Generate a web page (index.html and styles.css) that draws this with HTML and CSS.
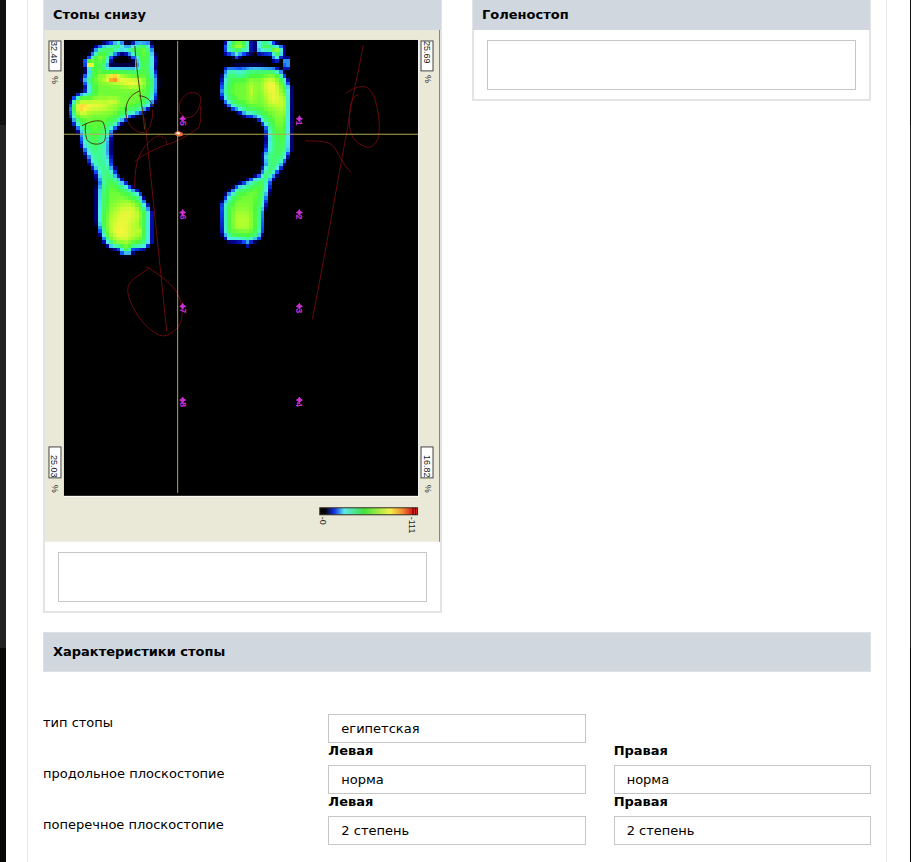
FILE: index.html
```html
<!DOCTYPE html>
<html lang="ru">
<head>
    <meta charset="UTF-8">
    <meta name="viewport" content="width=device-width, initial-scale=1.0">
    <title>Характеристики стопы</title>
    <link rel="stylesheet" href="styles.css">
</head>
<body>
    <main class="page">
        <div class="content">
            <div class="cards">
                <section class="card">
                    <h2 class="card-title">Стопы снизу</h2>
                    <svg class="scan" viewBox="45 30 396 513" role="img" aria-label="Скан стоп">
                        <rect class="scan-bg" x="43" y="29" width="400" height="514"/>
                        <path d="M441 29V543" stroke="#85857d" stroke-width="2"/>
                        <rect x="64" y="40" width="356" height="458" fill="#fff"/>
                        <rect x="64" y="40" width="355" height="457" fill="#000"/>
                        <g id="heat" shape-rendering="crispEdges"></g>

                        <!-- pen marks -->
                        <g class="pen">
                            <path d="M145 118 167 332"/>
                            <path d="M145 147C156 134 160 136 162 137C166 138 167 141 167 144M135 162C142 155 160 147 170 144C184 139 192 133 199 128C202 121 201 114 201 106"/>
                            <path d="M135 188C135 168 137 158 145 147"/>
                            <path d="M190 93C198 92 202 95 201 102C199 112 194 118 188 118C181 117 178 111 180 105C181 99 186 94 190 93Z"/>
                            <path d="M126 108C125 122 132 132 143 133C151 132 153 119 153 110"/>
                            <path d="M146 267 150 269C160 276 170 283 176 291C183 301 186 323 176 330C171 335 164 339 158 335C143 328 129 305 128 292C128 282 132 281 149 269"/>
                            <path d="M364 45C360 70 352 100 348 130C343 155 325 260 313 320"/>
                            <path d="M347 93C355 88 364 84 370 89C377 96 381 118 380 132C379 144 373 149 366 147C355 143 350 135 350 120C350 108 352 96 359 95"/>
                            <path d="M306 141C320 142 330 140 336 149C341 157 343 164 352 173"/>
                        </g>
                        <g class="pen pen-dark">
                            <path d="M135 46C137 74 143 110 145 130"/>
                            <path d="M140 91C130 95 126 102 126 112M139 96C147 96 151 101 153 106"/>
                            <path d="M82 126C91 121 99 120 103 122C106 128 107 138 104 142C99 146 91 145 87 140C85 134 85 128 86 124"/>
                        </g>

                        <path class="axis" d="M64 134.500H419M178 41V494"/>
                        <path d="M175 133l3-2 5 2 0 3-4 1-4-2z" fill="#f06a35"/>
                        <path d="M177 133l3 1" stroke="#fff" stroke-width="2"/>

                        <g id="marks"></g>

                        <g class="scale-box">
                            <rect x="49" y="41" width="12" height="30"/>
                            <rect x="49" y="448" width="12" height="31"/>
                            <rect x="422" y="41" width="12" height="30"/>
                            <rect x="422" y="448" width="12" height="31"/>
                        </g>
                        <g class="scale-text">
                            <text transform="translate(51 41) rotate(90)">32.46</text>
                            <text transform="translate(52 76) rotate(90)">%</text>
                            <text transform="translate(51 456) rotate(90)">25.03</text>
                            <text transform="translate(52 486) rotate(90)">%</text>
                            <text transform="translate(425 41) rotate(90)">25.69</text>
                            <text transform="translate(426 75) rotate(90)">%</text>
                            <text transform="translate(425 456) rotate(90)">16.82</text>
                            <text transform="translate(426 486) rotate(90)">%</text>
                            <text transform="translate(321 518) rotate(90)">-0</text>
                            <text transform="translate(410 518) rotate(90)">-111</text>
                        </g>

                        <defs>
                            <linearGradient id="palette">
                                <stop offset="0.050" stop-color="#000"/>
                                <stop offset="0.150" stop-color="#1732e6"/>
                                <stop offset="0.250" stop-color="#5be8ec"/>
                                <stop offset="0.450" stop-color="#42e13e"/>
                                <stop offset="0.720" stop-color="#f4f04a"/>
                                <stop offset="0.850" stop-color="#f18a30"/>
                                <stop offset="0.940" stop-color="#dc1d18"/>
                            </linearGradient>
                        </defs>
                        <rect x="320.500" y="509" width="98" height="7" fill="url(#palette)" stroke="#322b20"/>
                        <path d="M414 509v7M416.500 509v7" stroke="#400"/>
                    </svg>
                    <textarea class="note" aria-label="Стопы снизу"></textarea>
                </section>

                <section class="card">
                    <h2 class="card-title">Голеностоп</h2>
                    <textarea class="note" aria-label="Голеностоп"></textarea>
                </section>
            </div>

            <h2 class="section-title">Характеристики стопы</h2>

            <form class="form">
                <div class="row">
                    <label class="name" for="type">тип стопы</label>
                    <div class="field">
                        <input id="type" type="text" value="египетская">
                    </div>
                </div>
                <div class="row" role="group" aria-labelledby="long-name">
                    <span class="name name-low" id="long-name">продольное плоскостопие</span>
                    <div class="field">
                        <label for="long-left">Левая</label>
                        <input id="long-left" type="text" value="норма">
                    </div>
                    <div class="field">
                        <label for="long-right">Правая</label>
                        <input id="long-right" type="text" value="норма">
                    </div>
                </div>
                <div class="row" role="group" aria-labelledby="cross-name">
                    <span class="name name-low" id="cross-name">поперечное плоскостопие</span>
                    <div class="field">
                        <label for="cross-left">Левая</label>
                        <input id="cross-left" type="text" value="2 степень">
                    </div>
                    <div class="field">
                        <label for="cross-right">Правая</label>
                        <input id="cross-right" type="text" value="2 степень">
                    </div>
                </div>
            </form>
        </div>
    </main>
    <script src="scan.js"></script>
</body>
</html>
```
FILE: styles.css
```css
* {
    box-sizing: border-box;
}

body {
    margin: 0;
    padding: 0 1px 0 6px;
    background: linear-gradient(#111 0, #111 125px, #222 125px, #222 648px, #080904 648px);
    font-family: "DejaVu Sans", Verdana, sans-serif;
    font-size: 13px;
    line-height: 16px;
    color: #000;
}

.page {
    min-height: 100vh;
    padding: 0 23px 0 21px;
    background: #fff;
}

.content {
    min-height: 100vh;
    padding: 0 15px;
    border: solid #e6e6e6;
    border-width: 0 1px;
}

.cards {
    display: grid;
    grid-template-columns: 1fr 1fr;
    gap: 30px;
    align-items: start;
}

.card {
    border: 2px solid #e3e4e5;
    border-top: 0;
}

.card-title,
.section-title {
    margin: 0;
    font-size: 13px;
    background: #d0d7de;
}

.card-title {
    margin: 0 -1px;
    padding: 7px 9px;
}

.section-title {
    margin-top: 19px;
    padding: 11px 9px;
    border: 1px solid #dde1e5;
}

.scan {
    display: block;
    width: 100%;
    height: auto;
}

.scan-bg {
    fill: #eae9d7;
}

.pen {
    fill: none;
    stroke: #660a0e;
    stroke-width: 1;
}

.pen-dark {
    stroke: #4b3a12;
}

.axis {
    fill: none;
    stroke: #b3aa50;
}

.scale-box {
    fill: #fff;
    stroke: #444;
}

.scale-text {
    font-family: "Liberation Sans", Arial, sans-serif;
    font-size: 9px;
    fill: #222;
}

.mark {
    font-family: "Liberation Sans", Arial, sans-serif;
    font-size: 9px;
    font-weight: bold;
    fill: #d02fd6;
}

.note {
    display: block;
    width: calc(100% - 26px);
    height: 50px;
    margin: 10px 13px 9px;
    border: 1px solid #c6c6c6;
    background: #fff;
    resize: none;
}

.form {
    margin-top: 42px;
}

.row {
    display: grid;
    grid-template-columns: repeat(3, 1fr);
    column-gap: 28px;
}

.name {
    padding-top: 1px;
}

.name-low {
    padding-top: 23px;
}

.field label {
    display: block;
    height: 22px;
    font-weight: bold;
}

.field input {
    display: block;
    width: 100%;
    height: 29px;
    padding: 0 12px;
    border: 1px solid #c6c6c6;
    background: #fff;
    font: inherit;
    color: inherit;
}
```
FILE: scan.js
```js
const SVG = 'http://www.w3.org/2000/svg';
const CELL = 3.7;

// outlines of the pressure areas
const areas = [
    // left foot
    [113,41, 105,43, 97,46, 92,52, 88,57, 83,62, 86,68, 86,73, 82,78, 84,84, 86,90, 78,94, 72,99, 69,108, 70,117,
     74,125, 79,133, 81,145, 86,157, 90,166, 96,175, 98,183, 97,190, 97,222, 99,232, 104,243, 111,249, 120,251,
     122,256, 132,256, 134,251, 146,250, 152,243, 152,212, 146,201, 141,193, 132,187, 124,181, 117,174, 113,165,
     111,152, 111,140, 114,131, 122,124, 131,118, 142,114, 151,108, 156,100, 158,90, 158,78, 155,68, 156,60,
     154,50, 150,41, 137,40, 131,44, 125,44, 123,38, 113,38],
    // gap under the toes
    [110,66, 112,59, 117,55, 124,53, 129,56, 134,60, 135,66],
    // right foot
    [226,67, 237,66, 258,66, 275,67, 283,71, 289,80, 292,88, 292,150, 288,160, 283,168, 277,176, 272,182, 270,192,
     267,205, 265,212, 264,232, 260,240, 250,244, 248,247, 243,243, 228,242, 222,234, 221,206, 227,194, 236,186,
     245,182, 252,178, 260,174, 264,165, 263,155, 266,148, 267,138, 265,128, 258,120, 250,117, 247,118, 240,113,
     232,110, 225,104, 222,98, 220,92, 222,80, 224,72],
    // right toes
    [228,37, 252,37, 252,53, 242,56, 238,60, 233,56, 226,54, 224,48],
    [256,37, 270,37, 276,43, 285,46, 285,54, 279,62, 273,61, 271,55, 258,54, 256,50],
    [283,58, 291,58, 291,69, 285,69, 283,64]
];

// x, y, radius x, radius y, strength
const spots = [
    [113, 78, 6, 3, 0.26], [116, 78, 14, 6, 0.16], [133, 83, 12, 5, 0.18], [90, 64, 3, 3, 0.7],
    [80, 108, 7, 10, 0.2], [95, 106, 18, 7, 0.18], [113, 101, 6, 3, 0.1],
    [121, 232, 16, 19, 0.2], [141, 232, 3, 4, 0.1], [130, 212, 14, 10, 0.12],
    [272, 86, 9, 12, 0.2], [252, 91, 4, 12, 0.1], [285, 103, 6, 12, 0.16],
    [274, 101, 7, 8, 0.12], [243, 222, 14, 14, 0.1], [239, 44, 7, 5, 0.18], [276, 50, 4, 4, 0.2],
    [284, 120, 6, 16, 0.08], [146, 50, 5, 6, 0.08], [101, 58, 5, 4, 0.1],
    // lighter arches
    [101, 155, 14, 25, -0.12], [240, 72, 8, 8, -0.14], [275, 155, 10, 20, -0.06]
];

const colors = [
    [0, 0, 0, 20], [0.08, 0, 0, 150], [0.17, 15, 80, 255], [0.28, 80, 235, 235], [0.42, 60, 250, 150],
    [0.54, 75, 250, 60], [0.68, 175, 255, 45], [0.8, 250, 245, 60], [0.92, 255, 130, 30], [1, 225, 25, 20]
];

function inside(p, x, y) {
    let hit = false;
    for (let i = 0, j = p.length - 2; i < p.length; j = i, i += 2) {
        if ((p[i + 1] > y) !== (p[j + 1] > y) &&
            x < (p[j] - p[i]) * (y - p[i + 1]) / (p[j + 1] - p[i + 1]) + p[i]) {
            hit = !hit;
        }
    }
    return hit;
}

function edgeDistance(p, x, y) {
    let best = 1000;
    for (let i = 0, j = p.length - 2; i < p.length; j = i, i += 2) {
        const dx = p[i] - p[j];
        const dy = p[i + 1] - p[j + 1];
        const t = Math.max(0, Math.min(1, ((x - p[j]) * dx + (y - p[j + 1]) * dy) / (dx * dx + dy * dy)));
        best = Math.min(best, Math.hypot(x - p[j] - t * dx, y - p[j + 1] - t * dy));
    }
    return best;
}

function colorOf(v) {
    v = Math.max(0, Math.min(1, v));
    let i = 1;
    while (colors[i][0] < v) i++;
    const a = colors[i - 1];
    const b = colors[i];
    const t = (v - a[0]) / (b[0] - a[0]);
    return 'rgb(' + [1, 2, 3].map(k => Math.round(a[k] + (b[k] - a[k]) * t)).join(',') + ')';
}

function drawHeat() {
    const heat = document.getElementById('heat');
    for (let y = 41; y < 262; y += CELL) {
        for (let x = 65; x < 300; x += CELL) {
            const cx = x + CELL / 2;
            const cy = y + CELL / 2;
            const hit = areas.filter(p => inside(p, cx, cy)).length % 2 === 1;
            const edge = Math.min(...areas.map(p => edgeDistance(p, cx, cy)));
            const d = (hit ? edge : -edge) + 1.5;
            if (d <= 0) continue;

            let v = d < 8 ? d / 8 * 0.47 : 0.47 + Math.min((d - 8) / 8, 1) * 0.12;
            for (const s of spots) {
                v += s[4] * Math.min(1, d / 7) * Math.exp(-(((cx - s[0]) / s[2]) ** 2) - ((cy - s[1]) / s[3]) ** 2);
            }
            const r = document.createElementNS(SVG, 'rect');
            r.setAttribute('x', x);
            r.setAttribute('y', y);
            r.setAttribute('width', CELL);
            r.setAttribute('height', CELL);
            r.setAttribute('fill', colorOf(v));
            heat.appendChild(r);
        }
    }
}

function drawMarks() {
    const marks = document.getElementById('marks');
    for (let n = 1; n <= 8; n++) {
        const x = n > 4 ? 183 : 300;
        const y = 119 + (n - 1) % 4 * 94;
        marks.innerHTML += `<path class="mark" d="M${x - 3} ${y}l2-1 1-2 1 2 2 1-2 1-1 2-1-2z" stroke="#d02fd6"/>
            <text class="mark" transform="translate(${x - 3} ${y + 2}) rotate(90)">${n}</text>`;
    }
}

drawHeat();
drawMarks();
```
